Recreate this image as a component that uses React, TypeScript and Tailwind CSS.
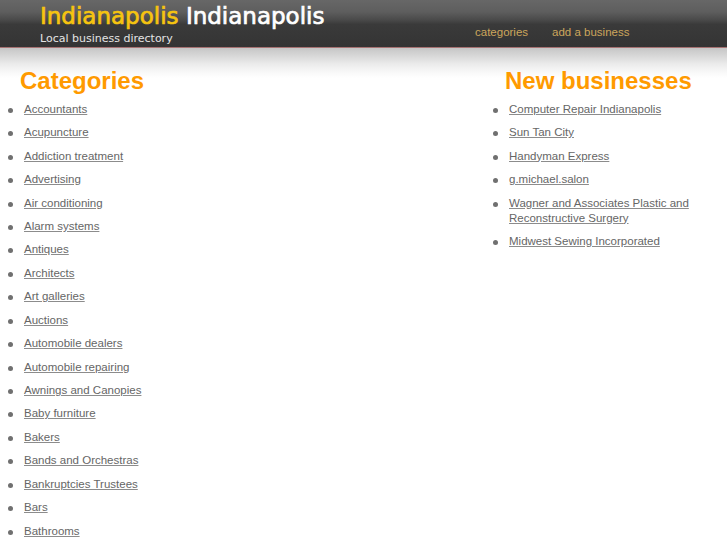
import React from "react";

const categories = [
  "Accountants",
  "Acupuncture",
  "Addiction treatment",
  "Advertising",
  "Air conditioning",
  "Alarm systems",
  "Antiques",
  "Architects",
  "Art galleries",
  "Auctions",
  "Automobile dealers",
  "Automobile repairing",
  "Awnings and Canopies",
  "Baby furniture",
  "Bakers",
  "Bands and Orchestras",
  "Bankruptcies Trustees",
  "Bars",
  "Bathrooms",
];

const newBusinesses = [
  "Computer Repair Indianapolis",
  "Sun Tan City",
  "Handyman Express",
  "g.michael.salon",
  "Wagner and Associates Plastic and Reconstructive Surgery",
  "Midwest Sewing Incorporated",
];

function Item({ label }: { label: string }) {
  return (
    <li className="flex items-start mb-[8.44px] leading-[15px]">
      <span className="w-[24px] shrink-0 flex">
        <span className="ml-[8px] mt-[6px] w-[5px] h-[5px] rounded-full bg-[#707070]" />
      </span>
      <a
        href="#"
        className="text-[#666666] underline decoration-[#8c8c8c] underline-offset-[1px] text-[11.5px]"
      >
        {label}
      </a>
    </li>
  );
}

export default function App() {
  return (
    <div
      className="w-[727px] h-[545px] overflow-hidden bg-white"
      style={{ fontFamily: '"Liberation Sans", Arial, sans-serif' }}
    >
      <header className="h-[47px] flex bg-[linear-gradient(to_bottom,#676767_0%,#5e5e5e_25%,#4a4a4a_42%,#3a3a3a_52%,#343434_100%)]">
        <div className="w-[475px] shrink-0 pl-[40px] pt-[2px]" style={{ fontFamily: '"DejaVu Sans", Verdana, sans-serif' }}>
          <div className="text-[23px] leading-[28px] whitespace-nowrap [-webkit-text-stroke-width:0.7px]">
            <span className="text-[#f6c410]">Indianapolis</span>{" "}
            <span className="text-white">Indianapolis</span>
          </div>
          <div className="mt-[2px] text-[11px] leading-[14px] text-[#e4e4e4]">
            Local business directory
          </div>
        </div>
        <nav className="flex gap-[24px] pt-[25px] text-[11.5px] leading-[14px] text-[#cca65c]">
          <a href="#">categories</a>
          <a href="#">add a business</a>
        </nav>
      </header>
      <div className="h-px bg-[#a77272]" />
      <main className="flex bg-[linear-gradient(to_bottom,#c6c6c6_0px,#d8d8d8_8px,#ebebeb_16px,#f8f8f8_24px,#ffffff_30px)]">
        <section className="w-[485px] shrink-0">
          <h2 className="pl-[20px] pt-[19px] text-[24px] leading-[28px] font-bold text-[#ff9a00]">
            Categories
          </h2>
          <ul className="mt-[6.8px]">
            {categories.map((c) => (
              <Item key={c} label={c} />
            ))}
          </ul>
        </section>
        <section className="flex-1">
          <h2 className="pl-[20px] pt-[19px] text-[24px] leading-[28px] font-bold text-[#ff9a00]">
            New businesses
          </h2>
          <ul className="mt-[6.8px]">
            {newBusinesses.map((c) => (
              <Item key={c} label={c} />
            ))}
          </ul>
        </section>
      </main>
    </div>
  );
}
